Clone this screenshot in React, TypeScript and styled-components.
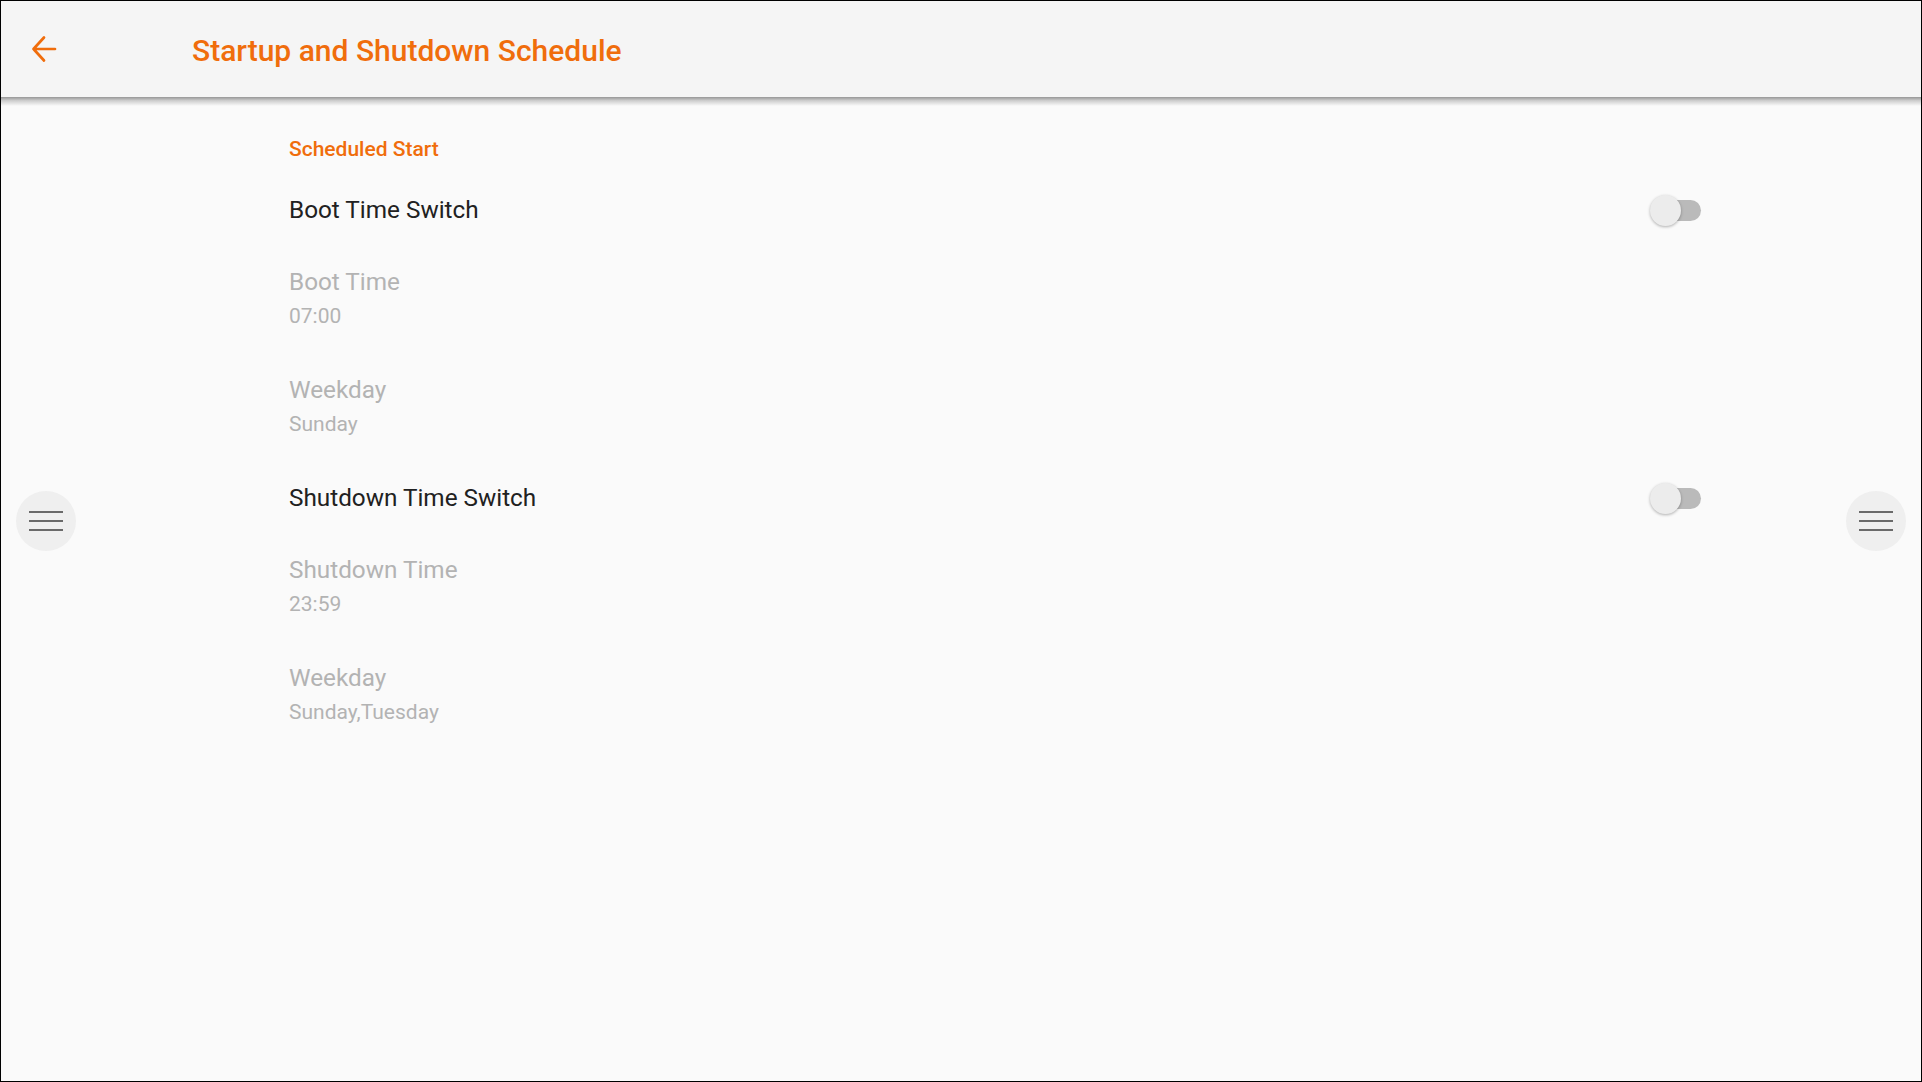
import React from "react";
import styled, { createGlobalStyle } from "styled-components";

const GlobalStyle = createGlobalStyle`
  html, body { margin: 0; padding: 0; background: #fafafa; }
  body { font-family: Roboto, "Noto Sans", "Liberation Sans", sans-serif; }
  * { box-sizing: border-box; }
`;

const ORANGE = "#f06d0c";

const Screen = styled.div`
  position: relative;
  width: 1922px;
  height: 1082px;
  border: 1px solid #000;
  background: #fafafa;
  overflow: hidden;
  display: flex;
  flex-direction: column;
`;

const Header = styled.header`
  position: relative;
  z-index: 2;
  height: 96px;
  flex: none;
  display: flex;
  align-items: center;
  background: #f5f5f5;

  &::after {
    content: "";
    position: absolute;
    left: 0;
    right: 0;
    top: 100%;
    height: 9px;
    background: linear-gradient(
      rgba(0, 0, 0, 0.4),
      rgba(0, 0, 0, 0.18) 40%,
      rgba(0, 0, 0, 0)
    );
    pointer-events: none;
  }
`;

const BackButton = styled.button`
  width: 191px;
  height: 96px;
  padding: 2px 0 0 29px;
  border: none;
  background: transparent;
  display: flex;
  align-items: center;
  cursor: pointer;
`;

const Title = styled.h1`
  margin: 0;
  padding-top: 2px;
  font-family: Roboto, sans-serif;
  font-weight: 500;
  font-size: 30px;
  color: ${ORANGE};
`;

const Body = styled.main`
  flex: 1;
  padding: 0 220px 0 288px;
  display: flex;
  flex-direction: column;
`;

const Category = styled.div`
  padding: 40px 0 13px;
  line-height: 24px;
  font-size: 21px;
  font-weight: 500;
  color: ${ORANGE};
`;

const SwitchRow = styled.div`
  height: 72px;
  display: flex;
  align-items: center;
  justify-content: space-between;
`;

const PrimaryText = styled.div<{ $disabled?: boolean }>`
  font-size: 24.3px;
  line-height: 36px;
  color: ${(p) => (p.$disabled ? "#b3b3b3" : "#212121")};
`;

const Item = styled.div`
  padding: 18px 0 22px;
  display: flex;
  flex-direction: column;
`;

const Summary = styled.div`
  font-size: 21px;
  line-height: 32px;
  color: #b3b3b3;
`;

const Track = styled.div`
  position: relative;
  width: 48px;
  height: 21px;
  border-radius: 11px;
  background: #bababa;
`;

const Thumb = styled.div`
  position: absolute;
  left: -3px;
  top: -5px;
  width: 31px;
  height: 31px;
  border-radius: 50%;
  background: #ececec;
  box-shadow: 0 1px 3px rgba(0, 0, 0, 0.3);
`;

const FloatButton = styled.button<{ $side: "left" | "right" }>`
  position: absolute;
  top: 490px;
  ${(p) => (p.$side === "left" ? "left: 15px;" : "right: 15px;")}
  width: 60px;
  height: 60px;
  border-radius: 50%;
  border: none;
  background: #efefef;
  display: flex;
  flex-direction: column;
  align-items: center;
  justify-content: center;
  gap: 7px;
  padding: 0;
`;

const MenuLine = styled.span`
  display: block;
  width: 34px;
  height: 2px;
  background: #6a6a6a;
`;

const Toggle = () => (
  <Track>
    <Thumb />
  </Track>
);

const Hamburger = ({ side }: { side: "left" | "right" }) => (
  <FloatButton $side={side}>
    <MenuLine />
    <MenuLine />
    <MenuLine />
  </FloatButton>
);

export default function App() {
  return (
    <>
      <GlobalStyle />
      <Screen>
        <Header>
          <BackButton aria-label="Back">
            <svg width="28" height="30" viewBox="0 0 28 30">
              <path
                d="M25 14H3.5 M14 2.5L3.5 14L14 25.5"
                fill="none"
                stroke={ORANGE}
                strokeWidth="2.7"
                strokeLinecap="round"
                strokeLinejoin="round"
              />
            </svg>
          </BackButton>
          <Title>Startup and Shutdown Schedule</Title>
        </Header>
        <Body>
          <Category>Scheduled Start</Category>
          <SwitchRow>
            <PrimaryText>Boot Time Switch</PrimaryText>
            <Toggle />
          </SwitchRow>
          <Item>
            <PrimaryText $disabled>Boot Time</PrimaryText>
            <Summary>07:00</Summary>
          </Item>
          <Item>
            <PrimaryText $disabled>Weekday</PrimaryText>
            <Summary>Sunday</Summary>
          </Item>
          <SwitchRow>
            <PrimaryText>Shutdown Time Switch</PrimaryText>
            <Toggle />
          </SwitchRow>
          <Item>
            <PrimaryText $disabled>Shutdown Time</PrimaryText>
            <Summary>23:59</Summary>
          </Item>
          <Item>
            <PrimaryText $disabled>Weekday</PrimaryText>
            <Summary>Sunday,Tuesday</Summary>
          </Item>
        </Body>
        <Hamburger side="left" />
        <Hamburger side="right" />
      </Screen>
    </>
  );
}
